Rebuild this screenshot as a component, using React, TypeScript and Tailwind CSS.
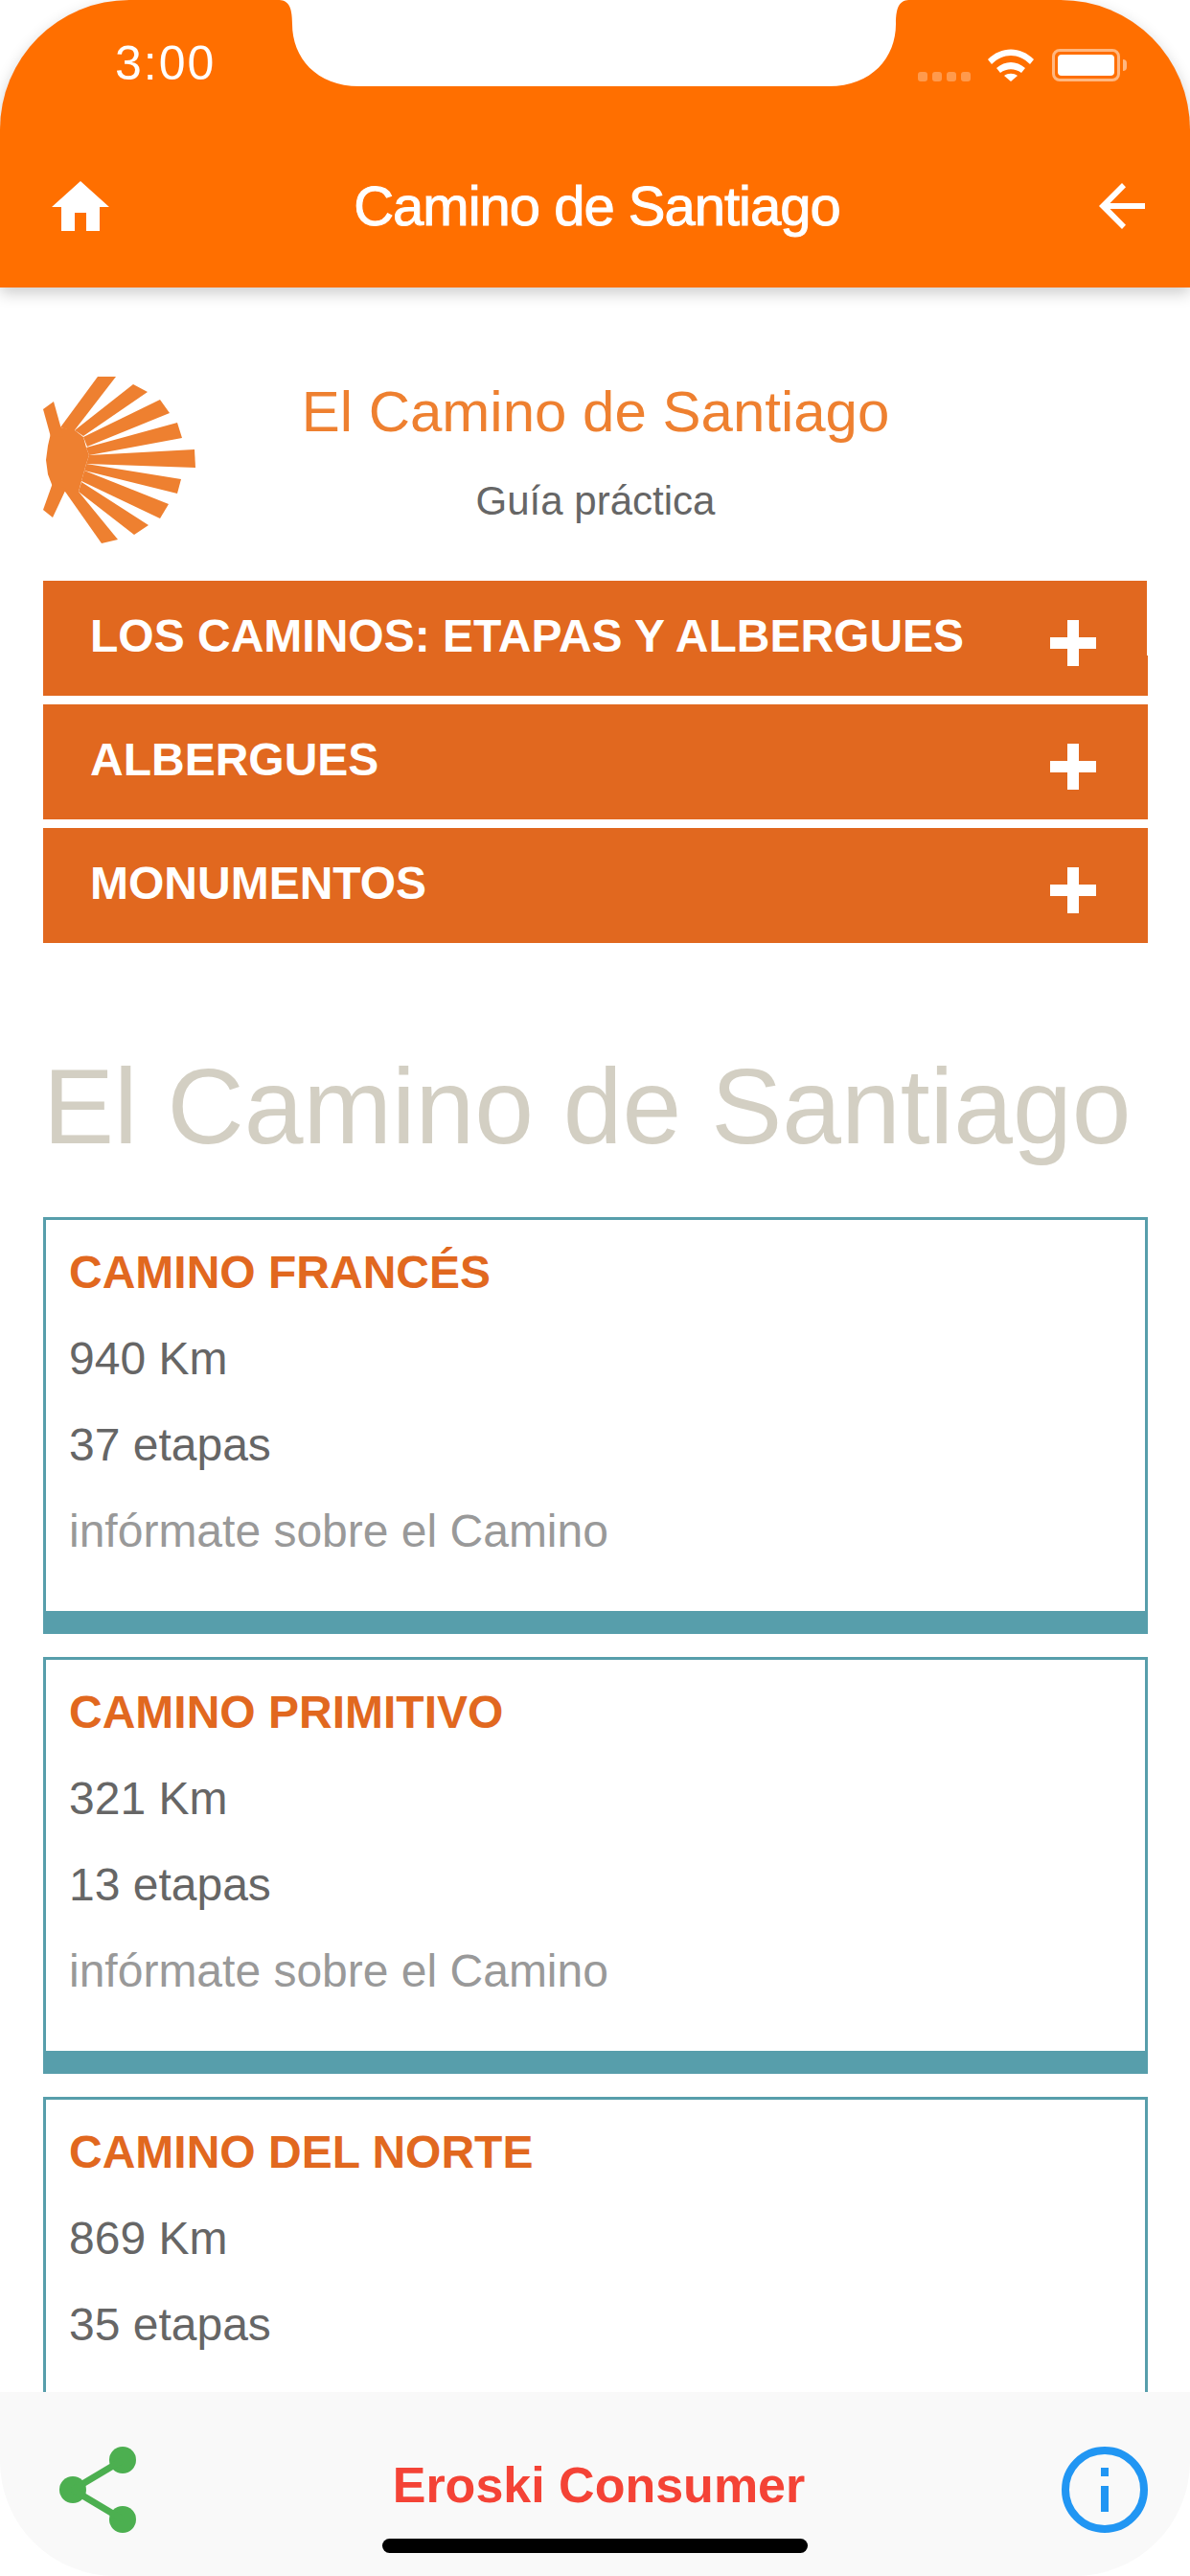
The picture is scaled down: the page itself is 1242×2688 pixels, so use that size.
const caminos = [
  { name: "CAMINO FRANCÉS", km: "940 Km", etapas: "37 etapas" },
  { name: "CAMINO PRIMITIVO", km: "321 Km", etapas: "13 etapas" },
  { name: "CAMINO DEL NORTE", km: "869 Km", etapas: "35 etapas" },
];

const menu = ["LOS CAMINOS: ETAPAS Y ALBERGUES", "ALBERGUES", "MONUMENTOS"];

function Shell() {
  return (
    <svg viewBox="45 393 160 175" className="h-[175px] w-[160px] shrink-0 fill-[#ee8030]">
      <polygon points="53,452 63,446 78,449 87,456 90,467 93,475 90,484 88,491 85,502 82,513 68,513 55,508 50,495 48,480 50,465" />
      <polygon points="45,427 56,419 66,455 53,456" />
      <polygon points="45,532 55,540 69,510 55,504" />
      <polygon points="102,393 121,393 77,450 63,446" />
      <polygon points="139,401 154,409 87,455 78,449" />
      <polygon points="167,417 177,431 91,466 87,456" />
      <polygon points="185,441 190,457 93,475 90,467" />
      <polygon points="203,469 204,488 90,484 93,475" />
      <polygon points="189,500 185,515 88,491 90,484" />
      <polygon points="176,526 167,541 85,502 88,491" />
      <polygon points="155,548 140,558 82,513 85,503" />
      <polygon points="123,563 106,567 68,513 82,513" />
    </svg>
  );
}

function HomeIcon() {
  return (
    <svg viewBox="0 0 60 52" className="h-[52px] w-[60px] fill-white">
      <path d="M30 0 60 27H50V52H36V33H24V52H10V27H0Z" />
    </svg>
  );
}

function ArrowIcon() {
  return (
    <svg viewBox="0 0 48 48" className="h-[48px] w-[48px] fill-white">
      <path d="M48 21H11.500L28 4.300 24 0 0 24l24 24 4-4.300L11.500 27H48z" />
    </svg>
  );
}

function PlusIcon() {
  return (
    <svg viewBox="0 0 48 48" className="mt-[10px] h-[48px] w-[48px] shrink-0 fill-white">
      <path d="M18 0h12v18h18v12H30v18H18V30H0V18h18z" />
    </svg>
  );
}

function ShareIcon() {
  return (
    <svg viewBox="0 0 80 90" className="h-[90px] w-[80px] fill-[#4caf50]">
      <circle cx="66" cy="14" r="14" />
      <circle cx="14" cy="45" r="14" />
      <circle cx="66" cy="76" r="14" />
      <path d="M14 45 66 14M14 45l52 31" stroke="#4caf50" strokeWidth="7" />
    </svg>
  );
}

function InfoIcon() {
  return (
    <svg viewBox="0 0 90 90" className="h-[90px] w-[90px]">
      <circle cx="45" cy="45" r="41" fill="none" stroke="#2196f3" strokeWidth="8" />
      <rect x="41" y="22" width="8" height="9" fill="#2196f3" />
      <rect x="41" y="41" width="8" height="27" fill="#2196f3" />
    </svg>
  );
}

function StatusIcons() {
  return (
    <div className="flex items-end">
      <div className="flex gap-[5px]">
        {[0, 1, 2, 3].map((i) => (
          <span key={i} className="h-[10px] w-[10px] rounded-[3px] bg-white/30" />
        ))}
      </div>
      <svg viewBox="0 0 48 34" className="ml-[18px] h-[34px] w-[48px] fill-white">
        <path d="M0 11C14-3 34-3 48 11l-4 5C32 4 16 4 4 16z" />
        <path d="M9 20c9-8 21-8 30 0l-4 5c-7-5-15-5-22 0z" />
        <path d="M17 28c4-3 10-3 14 0l-7 6z" />
      </svg>
      <div className="ml-[19px] flex items-center">
        <div className="flex h-[34px] w-[71px] items-center justify-center rounded-[8px] border-[3px] border-white/50">
          <div className="h-[22px] w-[59px] rounded-[4px] bg-white" />
        </div>
        <div className="ml-[3px] h-[12px] w-[4px] rounded-r-full bg-white/50" />
      </div>
    </div>
  );
}

function CaminoCard({ name, km, etapas }: { name: string; km: string; etapas: string }) {
  return (
    <div className="shrink-0 border-[3px] border-b-[24px] border-[#579eab] px-[24px] pt-[10px] pb-[38px] text-[48px] leading-[90px]">
      <div className="font-bold text-[#e1681f]">{name}</div>
      <div className="text-[#666666]">{km}</div>
      <div className="text-[#666666]">{etapas}</div>
      <div className="text-[#999999]">infórmate sobre el Camino</div>
    </div>
  );
}

export default function App() {
  return (
    <div className="relative flex h-[2688px] w-[1242px] flex-col overflow-hidden bg-white font-['Liberation_Sans',sans-serif]">
      <header className="relative z-10 h-[300px] shrink-0 rounded-t-[135px] bg-[#ff6f00] shadow-[0_6px_16px_rgba(0,0,0,0.2)]">
        <div className="flex h-[90px] items-end justify-between pr-[66px] pb-[5px] pl-[120px]">
          <span className="-mb-[4px] text-[50px] leading-[46px] font-medium tracking-[2px] text-white">3:00</span>
          <StatusIcons />
        </div>
        <div className="mt-[92px] flex items-center pr-[47px] pl-[54px]">
          <HomeIcon />
          <h1 className="flex-1 pr-[15px] text-center text-[58px] leading-[66px] tracking-[-1px] text-white [-webkit-text-stroke:1px_white]">Camino de Santiago</h1>
          <ArrowIcon />
        </div>
        <svg viewBox="0 0 660 90" className="absolute top-0 left-[290px] h-[90px] w-[660px] fill-white">
          <path d="M0 0C10 0 15 5 15 25 15 60 40 90 85 90H575C620 90 645 60 645 25 645 5 650 0 660 0Z" />
        </svg>
      </header>

      <main className="flex min-h-0 flex-1 flex-col overflow-hidden pt-[93px] pr-[44px] pl-[45px]">
        <div className="flex h-[174px] shrink-0">
          <Shell />
          <div className="flex-1 pr-[160px] text-center">
            <div className="text-[60px] leading-[74px] text-[#ee8030]">El Camino de Santiago</div>
            <div className="mt-[32px] text-[42px] leading-[48px] text-[#666666]">Guía práctica</div>
          </div>
        </div>

        <div className="mt-[39px] flex shrink-0 flex-col gap-[9px]">
          {menu.map((label, i) => (
            <div key={label} className="relative flex h-[120px] items-start justify-between bg-[#e1681f] pt-[31px] pr-[54px] pl-[49px]">
              <span className="text-[48px] leading-[54px] font-bold text-white">{label}</span>
              <PlusIcon />
              {i === 0 && <div className="absolute top-0 right-0 h-[78px] w-px bg-white" />}
            </div>
          ))}
        </div>

        <h2 className="mt-[104px] shrink-0 text-[111px] leading-[134px] whitespace-nowrap text-[#d3cfc3]">El Camino de Santiago</h2>

        <div className="mt-[48px] flex flex-col gap-[24px]">
          {caminos.map((c) => (
            <CaminoCard key={c.name} {...c} />
          ))}
        </div>
      </main>

      <footer className="relative z-10 flex h-[192px] shrink-0 items-start justify-between rounded-b-[120px] bg-[#f9f9f9] pt-[57px] pr-[44px] pl-[62px]">
        <ShareIcon />
        <span className="mt-[10px] text-[52px] leading-[60px] font-bold text-[#f44336]">Eroski Consumer</span>
        <InfoIcon />
        <div className="absolute top-[153px] left-[399px] h-[15px] w-[444px] rounded-full bg-black" />
      </footer>
    </div>
  );
}
